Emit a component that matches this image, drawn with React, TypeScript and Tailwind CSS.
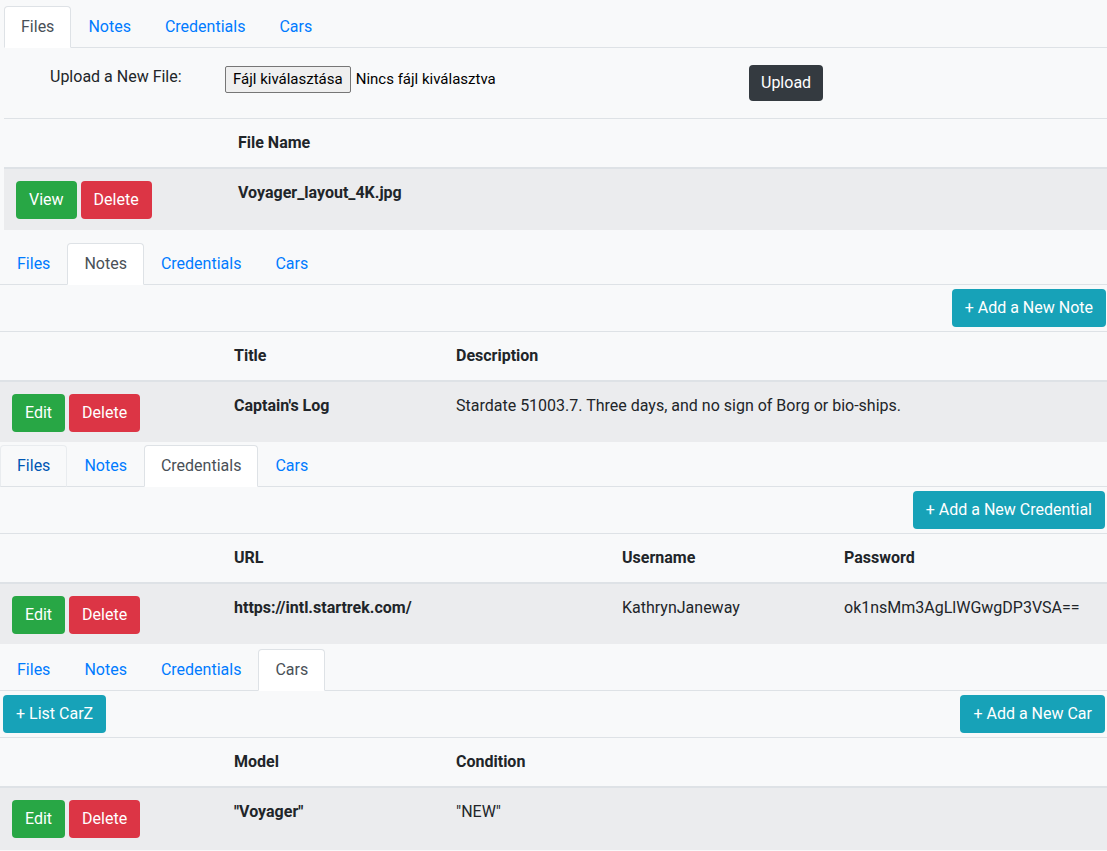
import React from 'react';

const tabNames = ['Files', 'Notes', 'Credentials', 'Cars'];

const Tabs = ({ active, hovered }: { active: string; hovered?: string }) => (
  <ul className="flex border-b border-[#dee2e6]">
    {tabNames.map(name => {
      let cls = 'block px-4 py-2 border rounded-t-[4px] leading-6 ';
      if (name === active) cls += 'bg-white border-[#dee2e6] border-b-white text-[#495057]';
      else if (name === hovered) cls += 'border-[#e9ecef] border-b-[#dee2e6] text-[#0056b3]';
      else cls += 'border-transparent text-[#007bff]';
      return (
        <li key={name} className="-mb-px">
          <a className={cls}>{name}</a>
        </li>
      );
    })}
  </ul>
);

const Btn = ({ color, children }: { color: string; children: React.ReactNode }) => (
  <button className={`inline-block px-3 py-[6px] leading-6 text-white rounded-[4px] border border-transparent ${color}`}>
    {children}
  </button>
);

const RowButtons = ({ first }: { first: string }) => (
  <div className="flex gap-1">
    <Btn color="bg-[#28a745]">{first}</Btn>
    <Btn color="bg-[#dc3545]">Delete</Btn>
  </div>
);

type TableProps = {
  cols: string;
  headers: string[];
  cells: string[];
  first: string;
  last?: boolean;
};

const DataTable = ({ cols, headers, cells, first, last }: TableProps) => (
  <div className="border-t border-[#dee2e6]">
    <div className={`grid ${cols} border-b-2 border-[#dee2e6]`}>
      <div className="p-3 leading-6"></div>
      {headers.map(h => (
        <div key={h} className="p-3 leading-6 font-bold">{h}</div>
      ))}
    </div>
    <div className={`grid ${cols} bg-[#ebecee]`}>
      <div className={`pt-3 px-3 ${last ? 'pb-3' : 'pb-[10px]'}`}>
        <RowButtons first={first} />
      </div>
      {cells.map((c, i) => (
        <div key={i} className={`pt-3 px-3 leading-6 ${i === 0 ? 'font-bold' : ''}`}>{c}</div>
      ))}
    </div>
  </div>
);

export default function App() {
  return (
    <div className="min-h-screen bg-[#f8f9fa] text-[#212529] text-base font-['Segoe_UI','Roboto',sans-serif]">
      {/* Files */}
      <section className="pl-1 pt-[6px] mb-[13px]">
        <Tabs active="Files" />
        <div className="flex items-start pt-[17px] pb-[17px] border-b border-[#dee2e6]">
          <div className="w-[221px] pl-[46px] leading-6">Upload a New File:</div>
          <div className="w-[524px] flex items-center mt-[1px] text-[15px]">
            <span className="px-[7px] h-[27px] leading-[25px] bg-[#efefef] border border-[#767676] rounded-[2px] text-black">
              Fájl kiválasztása
            </span>
            <span className="ml-[5px] text-black">Nincs fájl kiválasztva</span>
          </div>
          <button className="px-3 py-[6px] leading-6 text-white bg-[#343a40] rounded-[4px]">Upload</button>
        </div>
        <div className="grid grid-cols-[222px_1fr] border-b-2 border-[#dee2e6]">
          <div className="p-3 leading-6"></div>
          <div className="p-3 leading-6 font-bold">File Name</div>
        </div>
        <div className="grid grid-cols-[222px_1fr] bg-[#ebecee]">
          <div className="pt-3 pb-[11px] px-3">
            <RowButtons first="View" />
          </div>
          <div className="pt-3 px-3 leading-6 font-bold">Voyager_layout_4K.jpg</div>
        </div>
      </section>

      {/* Notes */}
      <section className="mb-[3px]">
        <Tabs active="Notes" />
        <div className="flex justify-end py-1 pr-[1px]">
          <Btn color="bg-[#17a2b8]">+ Add a New Note</Btn>
        </div>
        <DataTable
          cols="grid-cols-[222px_222px_1fr]"
          headers={['Title', 'Description']}
          cells={["Captain's Log", 'Stardate 51003.7. Three days, and no sign of Borg or bio-ships.']}
          first="Edit"
        />
      </section>

      {/* Credentials */}
      <section className="mb-[5px]">
        <Tabs active="Credentials" hovered="Files" />
        <div className="flex justify-end py-1 pr-[2px]">
          <Btn color="bg-[#17a2b8]">+ Add a New Credential</Btn>
        </div>
        <DataTable
          cols="grid-cols-[222px_388px_222px_1fr]"
          headers={['URL', 'Username', 'Password']}
          cells={['https://intl.startrek.com/', 'KathrynJaneway', 'ok1nsMm3AgLlWGwgDP3VSA==']}
          first="Edit"
        />
      </section>

      {/* Cars */}
      <section>
        <Tabs active="Cars" />
        <div className="flex justify-between py-1 pl-[3px] pr-[2px]">
          <Btn color="bg-[#17a2b8]">+ List CarZ</Btn>
          <Btn color="bg-[#17a2b8]">+ Add a New Car</Btn>
        </div>
        <DataTable
          cols="grid-cols-[222px_222px_1fr]"
          headers={['Model', 'Condition']}
          cells={['"Voyager"', '"NEW"']}
          first="Edit"
          last
        />
      </section>
    </div>
  );
}
